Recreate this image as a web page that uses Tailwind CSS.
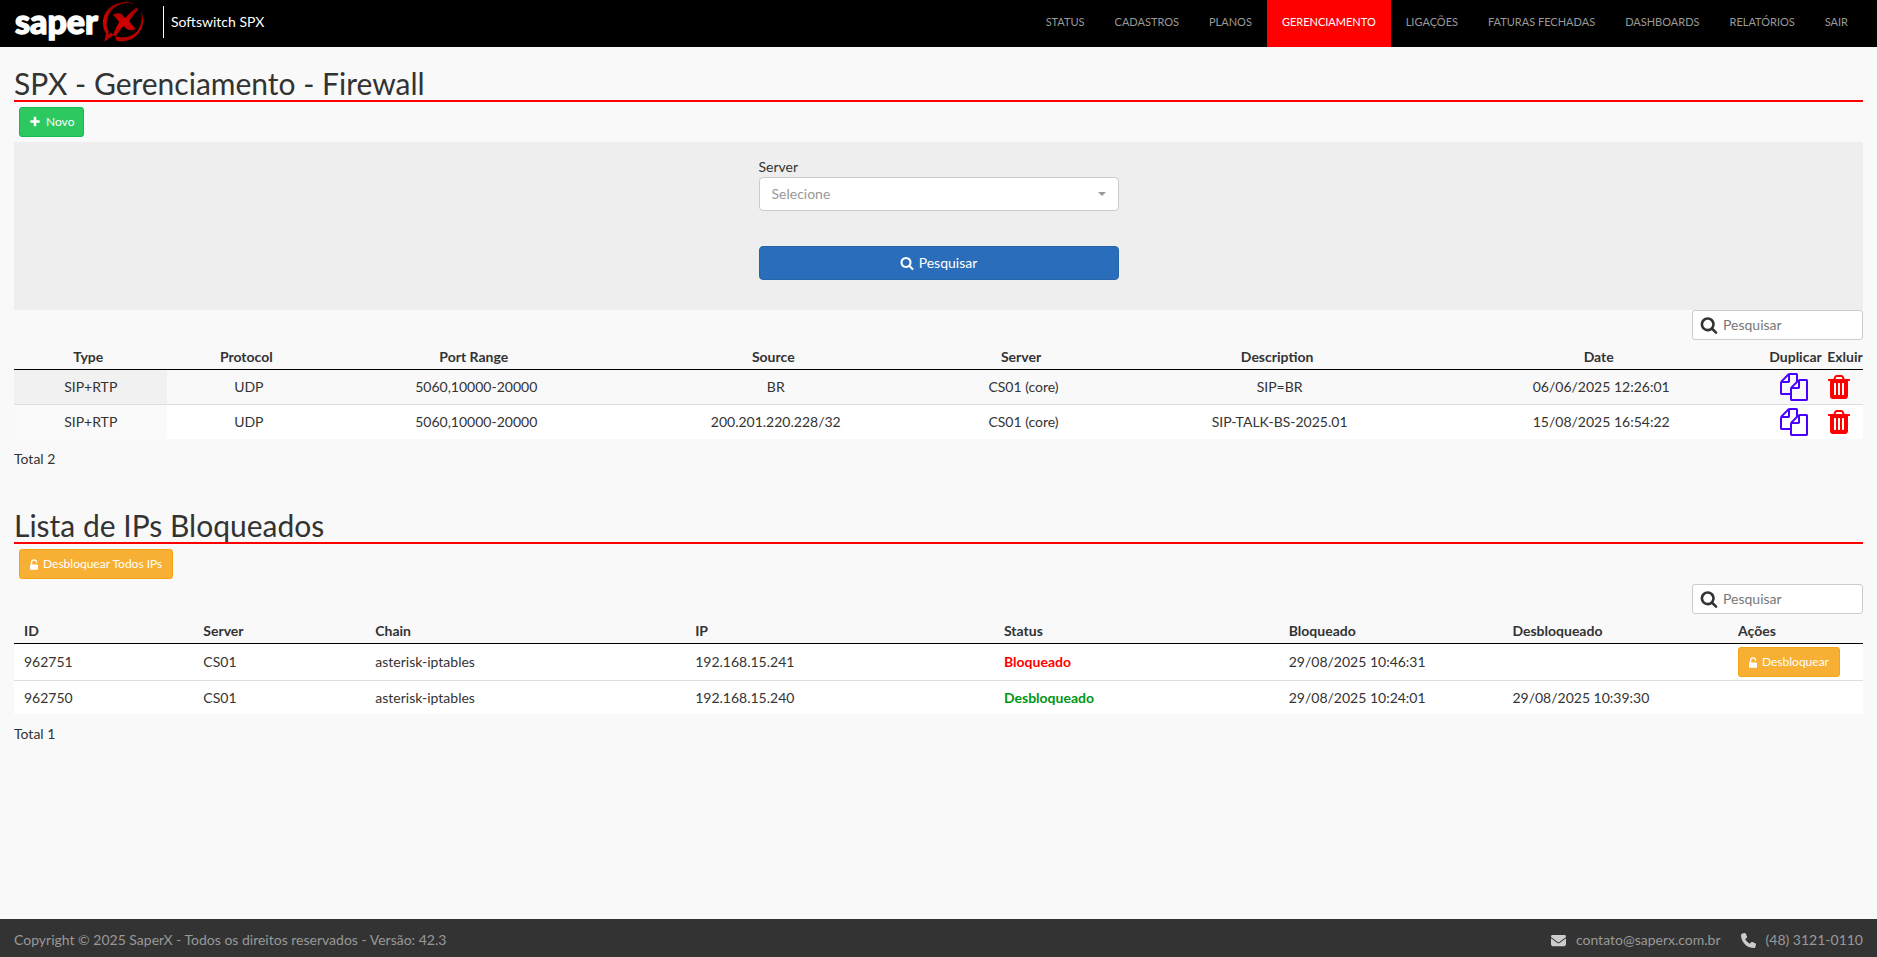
<!DOCTYPE html>
<html lang="pt-BR">
<head>
  <meta charset="UTF-8">
  <meta name="viewport" content="width=device-width, initial-scale=1.0">
  <title>SPX - Gerenciamento - Firewall</title>
  <script src="https://cdn.jsdelivr.net/npm/@tailwindcss/browser@4"></script>
</head>
<body class="min-h-screen flex flex-col bg-[#f9f9f9] text-[#333] text-sm font-['Lato',sans-serif]">
  <!-- icon sprite -->
  <svg class="hidden">
    <symbol id="search" viewBox="0 0 1792 1792"><path d="M1216 832q0-185-131.500-316.500t-316.500-131.500-316.500 131.500-131.500 316.500 131.500 316.500 316.500 131.500 316.500-131.500 131.500-316.500zm512 832q0 52-38 90t-90 38q-54 0-90-38l-343-342q-179 124-399 124-143 0-273.500-55.500t-225-150-150-225-55.500-273.500 55.500-273.500 150-225 225-150 273.500-55.500 273.500 55.500 225 150 150 225 55.500 273.500q0 220-124 399l343 343q37 37 37 90z"/></symbol>
    <symbol id="plus" viewBox="0 0 1792 1792"><path d="M1600 736v192q0 40-28 68t-68 28h-416v416q0 40-28 68t-68 28h-192q-40 0-68-28t-28-68v-416h-416q-40 0-68-28t-28-68v-192q0-40 28-68t68-28h416v-416q0-40 28-68t68-28h192q40 0 68 28t28 68v416h416q40 0 68 28t28 68z"/></symbol>
    <symbol id="trash" viewBox="192 0 1408 1792"><path d="M704 1376v-704q0-14-9-23t-23-9h-64q-14 0-23 9t-9 23v704q0 14 9 23t23 9h64q14 0 23-9t9-23zm256 0v-704q0-14-9-23t-23-9h-64q-14 0-23 9t-9 23v704q0 14 9 23t23 9h64q14 0 23-9t9-23zm256 0v-704q0-14-9-23t-23-9h-64q-14 0-23 9t-9 23v704q0 14 9 23t23 9h64q14 0 23-9t9-23zm-544-992h448l-48-117q-7-9-17-11h-317q-10 2-17 11zm928 32v64q0 14-9 23t-23 9h-96v948q0 83-47 143.500t-113 60.500h-832q-66 0-113-58.500t-47-141.500v-952h-96q-14 0-23-9t-9-23v-64q0-14 9-23t23-9h309l70-167q15-37 54-63t79-26h320q40 0 79 26t54 63l70 167h309q14 0 23 9t9 23z"/></symbol>
    <symbol id="files" viewBox="0 0 1792 1792"><path d="M1696 384q40 0 68 28t28 68v1216q0 40-28 68t-68 28h-960q-40 0-68-28t-28-68v-288h-544q-40 0-68-28t-28-68v-672q0-40 20-88t48-76l408-408q28-28 76-48t88-20h416q40 0 68 28t28 68v328q68-40 128-40h416zm-544 213l-299 299h299v-299zm-640-384l-299 299h299v-299zm196 647l316-316v-416h-384v416q0 40-28 68t-68 28h-416v640h512v-256q0-40 20-88t48-76zm956 804v-1152h-384v416q0 40-28 68t-68 28h-416v640h896z"/></symbol>
    <symbol id="unlock" viewBox="320 0 1152 1536"><path d="M1376 768q40 0 68 28t28 68v576q0 40-28 68t-68 28h-960q-40 0-68-28t-28-68v-576q0-40 28-68t68-28h32v-320q0-185 131.500-316.500t316.500-131.500 316.500 131.500 131.500 316.500q0 26-19 45t-45 19h-64q-26 0-45-19t-19-45q0-106-75-181t-181-75-181 75-75 181v320h736z"/></symbol>
    <symbol id="envelope" viewBox="0 0 512 512"><path d="M48 64C21.500 64 0 85.500 0 112c0 15.100 7.100 29.300 19.200 38.400L236.800 313.600c11.400 8.500 27 8.500 38.400 0L492.800 150.400c12.100-9.100 19.200-23.300 19.200-38.400c0-26.500-21.500-48-48-48L48 64zM0 176L0 384c0 35.300 28.700 64 64 64l384 0c35.300 0 64-28.700 64-64l0-208L294.400 339.200c-22.800 17.100-54 17.100-76.800 0L0 176z"/></symbol>
    <symbol id="phone" viewBox="0 0 512 512"><path d="M164.900 24.600c-7.700-18.600-28-28.500-47.400-23.200l-88 24C12.100 30.200 0 46 0 64C0 311.400 200.600 512 448 512c18 0 33.800-12.100 38.600-29.500l24-88c5.300-19.400-4.600-39.700-23.200-47.400l-96-40c-16.300-6.800-35.200-2.100-46.300 11.600L304.700 368C234.300 334.700 177.300 277.700 144 207.300L193.300 167c13.700-11.200 18.400-30 11.600-46.300l-40-96z"/></symbol>
  </svg>

  <header class="bg-black h-[47px] px-[14px] flex justify-between">
    <div class="flex items-start text-white">
      <a href="#" class="flex items-start" aria-label="saperX">
        <svg class="w-[130px] h-[44px]" viewBox="0 0 130 44">
          <defs>
            <linearGradient id="red" x1="0" y1="0" x2="0" y2="1">
              <stop offset="0" stop-color="#8e0000"/>
              <stop offset=".5" stop-color="#d40000"/>
              <stop offset="1" stop-color="#b00000"/>
            </linearGradient>
          </defs>
          <text x="1" y="34" fill="#fff" stroke="#fff" stroke-width="1.400" font-family="Lato, sans-serif" font-weight="900" font-size="34">saper</text>
          <g fill="url(#red)" transform="translate(89 2) scale(.3333)">
            <path d="M72 0C28 0 0 27 0 62c0 13 3 22 9 32L4 119l28-20c-3-2-6-4-9-7l-8 6 2-10C11 79 9 69 12 56 16 27 36 7 72 3c10-1 18 2 23 5C89 3 81 0 72 0z"/>
            <path d="M30 38c10-5 22-6 28 0l9 10C77 36 88 26 102 16l4 8C94 35 86 46 78 58l20 23c-11 6-23 5-30-2l-6-7C54 80 46 91 38 104l-8-6c6-14 12-26 19-38z"/>
            <path d="M112 24c11 18 11 42 1 60-14 27-42 36-66 34-10-1-12-9-6-15 6 3 13 4 22 3 25-2 45-17 51-41 4-15 3-29-2-41z"/>
          </g>
        </svg>
      </a>
      <span class="border-l border-white h-8 mt-[6px] ml-[19px] pl-[7px] leading-8">Softswitch SPX</span>
    </div>
    <nav>
      <ul class="flex h-full text-[11px] leading-4 text-[#999]">
        <li><a href="#" class="block h-full px-[15px] pt-[14px] hover:text-white">STATUS</a></li>
        <li><a href="#" class="block h-full px-[15px] pt-[14px] hover:text-white">CADASTROS</a></li>
        <li><a href="#" class="block h-full px-[15px] pt-[14px] hover:text-white">PLANOS</a></li>
        <li><a href="#" class="block h-full px-[15px] pt-[14px] bg-[#f00] text-white">GERENCIAMENTO</a></li>
        <li><a href="#" class="block h-full px-[15px] pt-[14px] hover:text-white">LIGAÇÕES</a></li>
        <li><a href="#" class="block h-full px-[15px] pt-[14px] hover:text-white">FATURAS FECHADAS</a></li>
        <li><a href="#" class="block h-full px-[15px] pt-[14px] hover:text-white">DASHBOARDS</a></li>
        <li><a href="#" class="block h-full px-[15px] pt-[14px] hover:text-white">RELATÓRIOS</a></li>
        <li><a href="#" class="block h-full px-[15px] pt-[14px] hover:text-white">SAIR</a></li>
      </ul>
    </nav>
  </header>

  <main class="grow px-[14px] pt-5">
    <section>
      <h1 class="text-[30px] leading-[33px] border-b-2 border-[#f00]">SPX - Gerenciamento - Firewall</h1>
      <button type="button" class="flex items-center gap-[5px] h-[30px] px-[9px] my-[5px] ml-[5px] rounded-[3px] border border-[#16ba55] bg-[#2dc960] text-white text-xs">
        <svg class="size-3 fill-current"><use href="#plus"/></svg>Novo
      </button>

      <form class="bg-[#eee] h-[168px] pt-[15px]">
        <div class="w-[360px] mx-auto">
          <label for="server" class="block leading-5">Server</label>
          <div class="relative">
            <select id="server" class="appearance-none block w-full h-[34px] px-3 rounded border border-[#ccc] bg-white text-[#999]">
              <option>Selecione</option>
              <option>CS01</option>
            </select>
            <svg class="absolute right-[13px] top-[15px] w-2 h-1 fill-[#999]" viewBox="0 0 8 4"><path d="M0 0h8L4 4z"/></svg>
          </div>
          <button type="button" class="flex items-center justify-center gap-[5px] w-full h-[34px] mt-[35px] rounded border border-[#2864a8] bg-[#2a6ebb] text-white">
            <svg class="size-[14px] fill-current"><use href="#search"/></svg>Pesquisar
          </button>
        </div>
      </form>

      <label class="flex items-center gap-[5px] w-[171px] h-[30px] ml-auto pl-[7px] pr-2 rounded-[3px] border border-[#ccc] bg-white">
        <svg class="size-[18px] shrink-0 fill-[#333]"><use href="#search"/></svg>
        <input type="text" aria-label="Pesquisar regras" placeholder="Pesquisar" class="w-full outline-none placeholder:text-[#777]">
      </label>
      <table class="w-full table-fixed border-separate border-spacing-0 text-center">
        <colgroup>
          <col class="w-[8.3%]">
          <col class="w-[8.8%]">
          <col class="w-[15.8%]">
          <col class="w-[16.6%]">
          <col class="w-[10.2%]">
          <col class="w-[17.5%]">
          <col>
          <col class="w-[66px]">
          <col class="w-[36px]">
        </colgroup>
        <thead>
          <tr class="h-[30px] [&>th]:border-b [&>th]:border-black">
            <th class="pt-[5px] pr-[5px]">Type</th>
            <th class="pt-[5px] pr-[5px]">Protocol</th>
            <th class="pt-[5px] pr-[5px]">Port Range</th>
            <th class="pt-[5px] pr-[5px]">Source</th>
            <th class="pt-[5px] pr-[5px]">Server</th>
            <th class="pt-[5px] pr-[5px]">Description</th>
            <th class="pt-[5px] pr-[5px]">Date</th>
            <th class="pt-[5px] pl-[3px]">Duplicar</th>
            <th class="pt-[5px]">Exluir</th>
          </tr>
        </thead>
        <tbody>
          <tr class="h-[35px] [&>td]:border-b [&>td]:border-[#ddd]">
            <td class="bg-[#f1f1f1]">SIP+RTP</td>
            <td>UDP</td>
            <td>5060,10000-20000</td>
            <td>BR</td>
            <td>CS01 (core)</td>
            <td>SIP=BR</td>
            <td>06/06/2025 12:26:01</td>
            <td><a href="#" class="block" aria-label="Duplicar"><svg class="size-7 mx-auto fill-[#4800ff]"><use href="#files"/></svg></a></td>
            <td><a href="#" class="block" aria-label="Excluir"><svg class="w-[22px] h-7 ml-[1px] fill-[#f00]"><use href="#trash"/></svg></a></td>
          </tr>
          <tr class="h-[34px] bg-white">
            <td class="bg-[#fafafa]">SIP+RTP</td>
            <td>UDP</td>
            <td>5060,10000-20000</td>
            <td>200.201.220.228/32</td>
            <td>CS01 (core)</td>
            <td>SIP-TALK-BS-2025.01</td>
            <td>15/08/2025 16:54:22</td>
            <td><a href="#" class="block" aria-label="Duplicar"><svg class="size-7 mx-auto fill-[#4800ff]"><use href="#files"/></svg></a></td>
            <td><a href="#" class="block" aria-label="Excluir"><svg class="w-[22px] h-7 ml-[1px] fill-[#f00]"><use href="#trash"/></svg></a></td>
          </tr>
        </tbody>
      </table>
      <p class="mt-[10px] leading-5">Total 2</p>
    </section>

    <section class="mt-10">
      <h2 class="text-[30px] leading-[33px] border-b-2 border-[#f00]">Lista de IPs Bloqueados</h2>
      <button type="button" class="flex items-center gap-[5px] h-[30px] px-[10px] my-[5px] ml-[5px] rounded-[3px] border border-[#f4a411] bg-[#f7b033] text-white text-xs">
        <svg class="w-2 h-[11px] fill-current"><use href="#unlock"/></svg>Desbloquear Todos IPs
      </button>

      <label class="flex items-center gap-[5px] w-[171px] h-[30px] ml-auto pl-[7px] pr-2 rounded-[3px] border border-[#ccc] bg-white">
        <svg class="size-[18px] shrink-0 fill-[#333]"><use href="#search"/></svg>
        <input type="text" aria-label="Pesquisar IPs" placeholder="Pesquisar" class="w-full outline-none placeholder:text-[#777]">
      </label>
      <table class="w-full table-fixed border-separate border-spacing-0 text-left">
        <colgroup>
          <col class="w-[9.7%]">
          <col class="w-[9.3%]">
          <col class="w-[17.3%]">
          <col class="w-[16.7%]">
          <col class="w-[15.4%]">
          <col class="w-[12.1%]">
          <col class="w-[12.2%]">
          <col>
        </colgroup>
        <thead>
          <tr class="h-[30px] [&>th]:border-b [&>th]:border-black">
            <th class="pt-[5px] px-[10px]">ID</th>
            <th class="pt-[5px] px-[10px]">Server</th>
            <th class="pt-[5px] px-[10px]">Chain</th>
            <th class="pt-[5px] px-[10px]">IP</th>
            <th class="pt-[5px] px-[10px]">Status</th>
            <th class="pt-[5px] px-[10px]">Bloqueado</th>
            <th class="pt-[5px] px-[10px]">Desbloqueado</th>
            <th class="pt-[5px] px-[10px]">Ações</th>
          </tr>
        </thead>
        <tbody class="bg-white">
          <tr class="h-[37px] [&>td]:border-b [&>td]:border-[#ddd]">
            <td class="px-[10px]">962751</td>
            <td class="px-[10px]">CS01</td>
            <td class="px-[10px]">asterisk-iptables</td>
            <td class="px-[10px]">192.168.15.241</td>
            <td class="px-[10px] font-bold text-[#f00]">Bloqueado</td>
            <td class="px-[10px]">29/08/2025 10:46:31</td>
            <td class="px-[10px]"></td>
            <td class="px-[10px]">
              <button type="button" class="flex items-center gap-[5px] h-[30px] px-[10px] rounded-[3px] border border-[#f4a411] bg-[#f7b033] text-white text-xs">
                <svg class="w-2 h-[11px] fill-current"><use href="#unlock"/></svg>Desbloquear
              </button>
            </td>
          </tr>
          <tr class="h-[33px]">
            <td class="px-[10px]">962750</td>
            <td class="px-[10px]">CS01</td>
            <td class="px-[10px]">asterisk-iptables</td>
            <td class="px-[10px]">192.168.15.240</td>
            <td class="px-[10px] font-bold text-[#009614]">Desbloqueado</td>
            <td class="px-[10px]">29/08/2025 10:24:01</td>
            <td class="px-[10px]">29/08/2025 10:39:30</td>
            <td class="px-[10px]"></td>
          </tr>
        </tbody>
      </table>
      <p class="mt-[10px] leading-5">Total 1</p>
    </section>
  </main>

  <footer class="bg-[#333] text-[#999] h-[38px] px-[14px] pt-1 flex items-center justify-between">
    <p>Copyright © 2025 SaperX - Todos os direitos reservados - Versão: 42.3</p>
    <div class="flex gap-5">
      <a href="mailto:contato@saperx.com.br" class="flex items-center gap-[10px]"><svg class="size-[15px] fill-[#ccc]"><use href="#envelope"/></svg>contato@saperx.com.br</a>
      <a href="tel:+554831210110" class="flex items-center gap-[10px]"><svg class="size-[15px] fill-[#ccc]"><use href="#phone"/></svg>(48) 3121-0110</a>
    </div>
  </footer>
</body>
</html>
